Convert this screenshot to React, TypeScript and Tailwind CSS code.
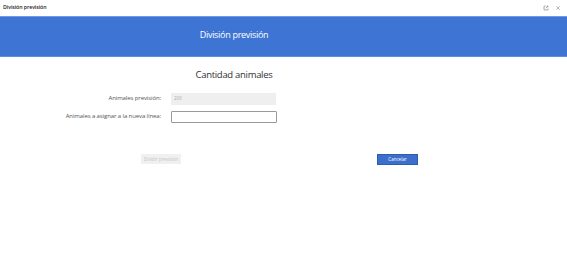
import { X } from "lucide-react";

function PopOutIcon() {
  return (
    <svg width="6" height="6" viewBox="0 0 12 12" fill="none" stroke="#8a8a8a" strokeWidth="1.4">
      <path d="M5 2H2v8h8V7" />
      <path d="M7 2h3v3" />
      <path d="M10 2L5.5 6.5" />
    </svg>
  );
}

export default function App() {
  return (
    <div className="w-[567px] h-[263px] bg-white font-['Open_Sans',sans-serif] text-[#333]">
      {/* window title bar */}
      <div className="h-[16px] flex items-center justify-between pl-[3px] pr-[6px]">
        <span className="text-[5.3px] text-[#222] font-semibold tracking-[-0.1px]">División previsión</span>
        <div className="flex items-center gap-[6px]">
          <PopOutIcon />
          <X className="w-[6px] h-[6px] text-[#8a8a8a]" strokeWidth={2.5} />
        </div>
      </div>

      {/* blue header */}
      <div className="h-[41px] bg-[#3e75d5] border-t border-[#6f9be6] border-b border-b-[#5f8fe0]">
        <div className="w-[468px] h-full flex items-center justify-center pb-[3px]">
          <h1 className="text-[9px] tracking-[-0.3px] text-white">División previsión</h1>
        </div>
      </div>

      <div className="w-[468px]">
        <h2 className="text-center text-[9.5px] tracking-[-0.3px] text-[#333] mt-[13px] leading-none">
          Cantidad animales
        </h2>

        <div className="mt-[13px] flex flex-col gap-[6px]">
          <div className="flex items-center">
            <label className="w-[161px] text-right text-[6px] tracking-[-0.1px] text-[#555]">
              Animales previsión:
            </label>
            <div className="ml-[10px] w-[105px] h-[12px] bg-[#efefef] flex items-center pl-[3px] text-[4.5px] text-[#aaa]">
              200
            </div>
          </div>
          <div className="flex items-center">
            <label className="w-[161px] text-right text-[6px] tracking-[-0.1px] text-[#555]">
              Animales a asignar a la nueva línea:
            </label>
            <div className="ml-[10px] w-[106px] h-[12px] bg-white border border-[#9a9a9a] rounded-[1px]" />
          </div>
        </div>

        <div className="mt-[31px] flex items-center pl-[141px] pr-[50px]">
          <button className="w-[40px] h-[10px] bg-[#f0f0f0] text-[4.5px] text-[#c4c4c4] flex items-center justify-center">
            Dividir previsión
          </button>
          <button className="ml-auto w-[41px] h-[11px] bg-[#3b6fcb] border border-[#2f5cae] text-[4.5px] text-white flex items-center justify-center">
            Cancelar
          </button>
        </div>
      </div>
    </div>
  );
}
